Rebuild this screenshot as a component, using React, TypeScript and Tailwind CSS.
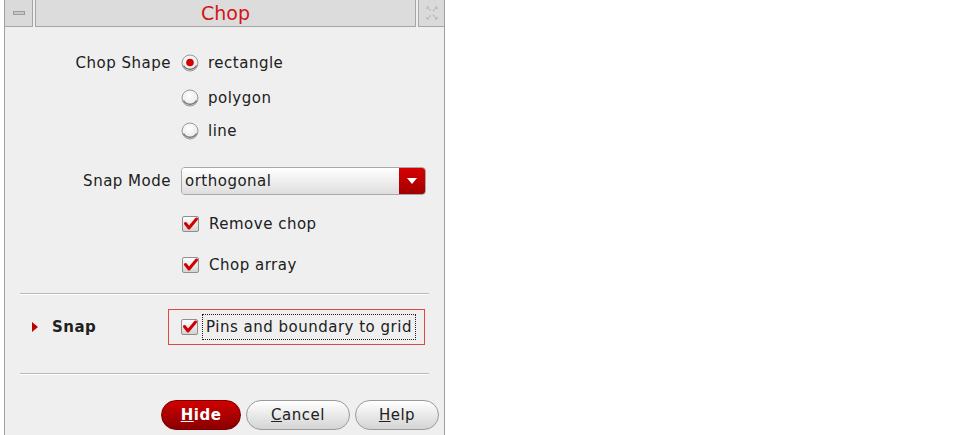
import React from 'react';

const Radio = ({ checked }: { checked?: boolean }) => (
  <svg width="18" height="18" viewBox="0 0 18 18" className="shrink-0">
    <defs>
      <radialGradient id="rg" cx="45%" cy="35%" r="70%">
        <stop offset="0%" stopColor="#ffffff" />
        <stop offset="70%" stopColor="#ececec" />
        <stop offset="100%" stopColor="#bdbdbd" />
      </radialGradient>
    </defs>
    <circle cx="9" cy="9" r="8" fill="url(#rg)" stroke="#9a9a9a" strokeWidth="1" />
    <path d="M2.5 11.5 A7.5 7.5 0 0 0 15.5 11.5" fill="none" stroke="#707070" strokeWidth="1.4" />
    {checked && <circle cx="9" cy="8.5" r="3.8" fill="#d40000" />}
  </svg>
);

const Check = () => (
  <svg width="20" height="18" viewBox="0 0 20 18" className="shrink-0">
    <defs>
      <linearGradient id="cg" x1="0" y1="0" x2="0" y2="1">
        <stop offset="0%" stopColor="#ffffff" />
        <stop offset="100%" stopColor="#d2d2d2" />
      </linearGradient>
    </defs>
    <rect x="1.5" y="1.5" width="16" height="15" rx="1.5" fill="url(#cg)" stroke="#8f8f8f" />
    <path d="M4.5 8.5 L8 13 L15.5 4" fill="none" stroke="#d10000" strokeWidth="3" strokeLinecap="round" strokeLinejoin="round" />
  </svg>
);

const Sep = () => <div className="mx-[15px] border-t border-t-[#b8b8b8] border-b border-b-white" />;

export default function App() {
  return (
    <div className="w-[963px] h-[435px] bg-white flex text-[15px] tracking-[0.5px] text-[#202020]" style={{ fontFamily: '"DejaVu Sans", sans-serif' }}>
      <div className="ml-[4px] w-[441px] h-[435px] bg-[#efefef] border-l border-r border-[#a0a0a0] flex flex-col">
        {/* title bar */}
        <div className="h-[28px] flex gap-[2px] bg-[#efefef]">
          <div className="w-[28px] h-[27px] bg-[#dadada] border-r border-b border-[#a6a6a6] flex items-center justify-center">
            <div className="w-[12px] h-[4px] bg-[#c8c8c8] border border-[#9c9c9c]" />
          </div>
          <div className="flex-1 h-[27px] bg-[#dcdcdc] border-l border-r border-b border-[#a6a6a6] flex items-center justify-center text-[19px] tracking-normal text-[#d41414]">
            Chop
          </div>
          <div className="w-[26px] h-[27px] bg-[#dadada] border-l border-b border-[#a6a6a6] flex items-center justify-center">
            <svg width="14" height="16" viewBox="0 0 14 16">
              <path d="M2 2 L6 6 M8 6 L12 2 M2 14 L6 10 M8 10 L12 14 M2 2 H5 M2 2 V5 M12 2 H9 M12 2 V5 M2 14 H5 M2 14 V11 M12 14 H9 M12 14 V11" fill="none" stroke="#bdbdbd" strokeWidth="1.5" strokeDasharray="2 1" />
            </svg>
          </div>
        </div>

        <div className="h-[18px]" />
        <div className="h-[34px] flex items-center">
          <div className="w-[166px] text-right">Chop Shape</div>
          <div className="ml-[10px] flex items-center gap-[9px]"><Radio checked />rectangle</div>
        </div>
        <div className="h-[36px] flex items-center">
          <div className="w-[166px]" />
          <div className="ml-[10px] flex items-center gap-[9px]"><Radio />polygon</div>
        </div>
        <div className="h-[30px] flex items-center">
          <div className="w-[166px]" />
          <div className="ml-[10px] flex items-center gap-[9px]"><Radio />line</div>
        </div>

        <div className="mt-[21px] h-[28px] flex items-center">
          <div className="w-[166px] text-right">Snap Mode</div>
          <div className="ml-[10px] w-[245px] h-[28px] flex rounded-[4px] border border-[#a8a8a8] overflow-hidden">
            <div className="flex-1 flex items-center pl-[3px] bg-gradient-to-b from-white to-[#dedede]">orthogonal</div>
            <div className="w-[26px] flex items-center justify-center bg-gradient-to-b from-[#d80000] to-[#a00000]">
              <svg width="10" height="6" viewBox="0 0 10 6"><path d="M0 0 H10 L5 6 Z" fill="#fff" /></svg>
            </div>
          </div>
        </div>

        <div className="mt-[15px] h-[28px] flex items-center">
          <div className="w-[166px]" />
          <div className="ml-[10px] flex items-center gap-[8px]"><Check />Remove chop</div>
        </div>
        <div className="mt-[13px] h-[28px] flex items-center">
          <div className="w-[166px]" />
          <div className="ml-[10px] flex items-center gap-[8px]"><Check />Chop array</div>
        </div>

        <div className="mt-[14px]"><Sep /></div>

        <div className="mt-[14px] h-[36px] flex items-center">
          <div className="w-[163px] flex items-center">
            <svg width="6" height="10" viewBox="0 0 6 10" className="ml-[27px]"><path d="M0 0 L6 5 L0 10 Z" fill="#c00000" /></svg>
            <span className="ml-[14px] font-bold">Snap</span>
          </div>
          <div className="w-[257px] h-[36px] border border-[#e64545] flex items-center pl-[11px]">
            <Check />
            <span className="ml-[2px] px-[3px] h-[26px] flex items-center border border-dotted border-[#202020] whitespace-nowrap">Pins and boundary to grid</span>
          </div>
        </div>

        <div className="mt-[28px]"><Sep /></div>

        <div className="mt-[25px] flex justify-end pr-[5px] gap-[5px]">
          <button className="w-[80px] h-[30px] rounded-full bg-gradient-to-b from-[#d00000] to-[#8a0000] border border-[#7a0000] text-white font-bold">
            <span className="underline">H</span>ide
          </button>
          <button className="w-[104px] h-[30px] rounded-full bg-gradient-to-b from-white to-[#d4d4d4] border border-[#9a9a9a]">
            <span className="underline">C</span>ancel
          </button>
          <button className="w-[84px] h-[30px] rounded-full bg-gradient-to-b from-white to-[#d4d4d4] border border-[#9a9a9a]">
            <span className="underline">H</span>elp
          </button>
        </div>
      </div>
    </div>
  );
}
